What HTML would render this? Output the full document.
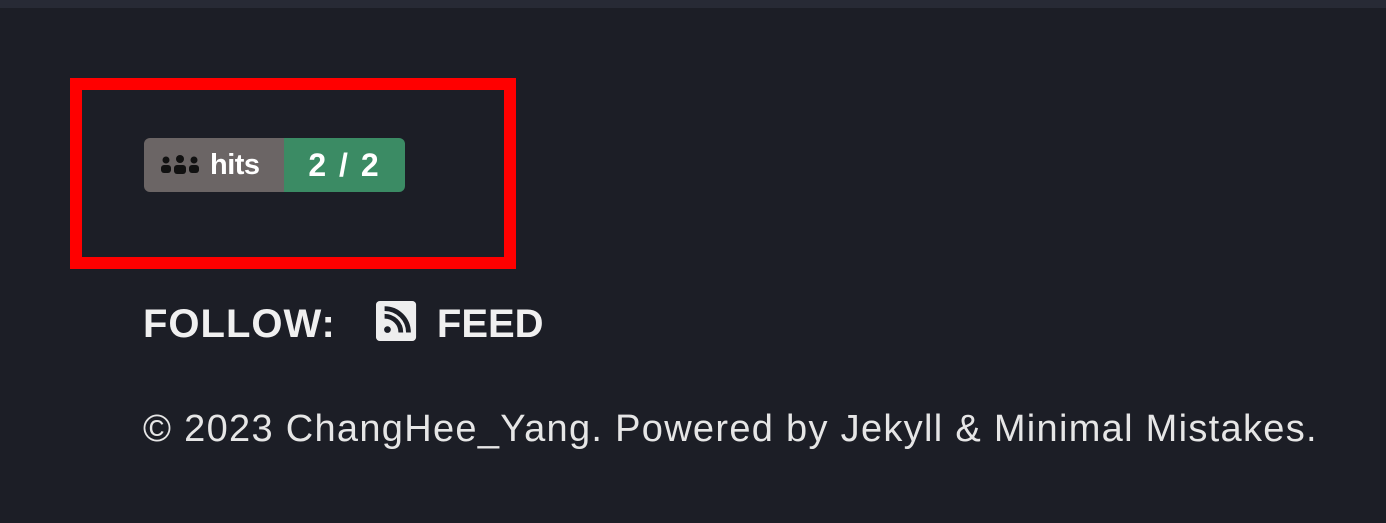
<!DOCTYPE html>
<html><head><style>
html,body{margin:0;padding:0;}
body{width:1386px;height:523px;background:#1c1e26;position:relative;overflow:hidden;font-family:"Liberation Sans",sans-serif;color:#eaeaea;}
.top{position:absolute;left:0;top:0;width:1386px;height:8px;background:#272a35;}
.red{position:absolute;left:70px;top:78px;width:422px;height:167px;border:12px solid #ff0000;}
.badge{position:absolute;left:144px;top:138px;height:54px;width:261px;border-radius:6px;overflow:hidden;display:flex;font-size:30px;color:#fff;}
.l{background:#6b6565;width:140px;display:flex;align-items:center;padding-left:16px;box-sizing:border-box;font-weight:bold;font-size:29px;letter-spacing:-0.5px;}
.r{background:#3b8b64;flex:1;display:flex;align-items:center;justify-content:center;font-weight:bold;font-size:32px;letter-spacing:2px;}
.follow{position:absolute;left:143px;top:300px;font-size:40px;font-weight:bold;letter-spacing:1px;color:#f0f0f0;white-space:nowrap;}
.feed{letter-spacing:0px;}
.copy{position:absolute;left:143px;top:408px;font-size:38px;color:#e6e6e6;white-space:nowrap;letter-spacing:1.3px;}
</style></head><body>
<div class="top"></div>
<div class="red"></div>
<div class="badge"><div class="l"><svg width="42" height="22" viewBox="0 0 42 22" style="margin-right:8px"><g fill="#111"><circle cx="6" cy="6" r="3.5"/><circle cx="20" cy="5" r="4"/><circle cx="34" cy="6" r="3.5"/><rect x="1" y="11" width="10" height="8" rx="3"/><rect x="14" y="11" width="12" height="9" rx="3"/><rect x="29" y="11" width="10" height="8" rx="3"/></g></svg>hits</div><div class="r">2 / 2</div></div>
<div class="follow">FOLLOW:<svg width="42" height="42" viewBox="0 0 44 42" style="margin:0 19px 0 40px;vertical-align:-5px"><rect x="0" y="0" width="42" height="42" rx="4" fill="#eee"/><g fill="none" stroke="#1c1e26" stroke-width="5"><path d="M9 16a17 17 0 0 1 17 17"/><path d="M9 8a25 25 0 0 1 25 25"/></g><circle cx="12" cy="30" r="3.5" fill="#1c1e26"/></svg><span class="feed">FEED</span></div>
<div class="copy">© 2023 ChangHee_Yang. Powered by Jekyll &amp; Minimal Mistakes.</div>
</body></html>
